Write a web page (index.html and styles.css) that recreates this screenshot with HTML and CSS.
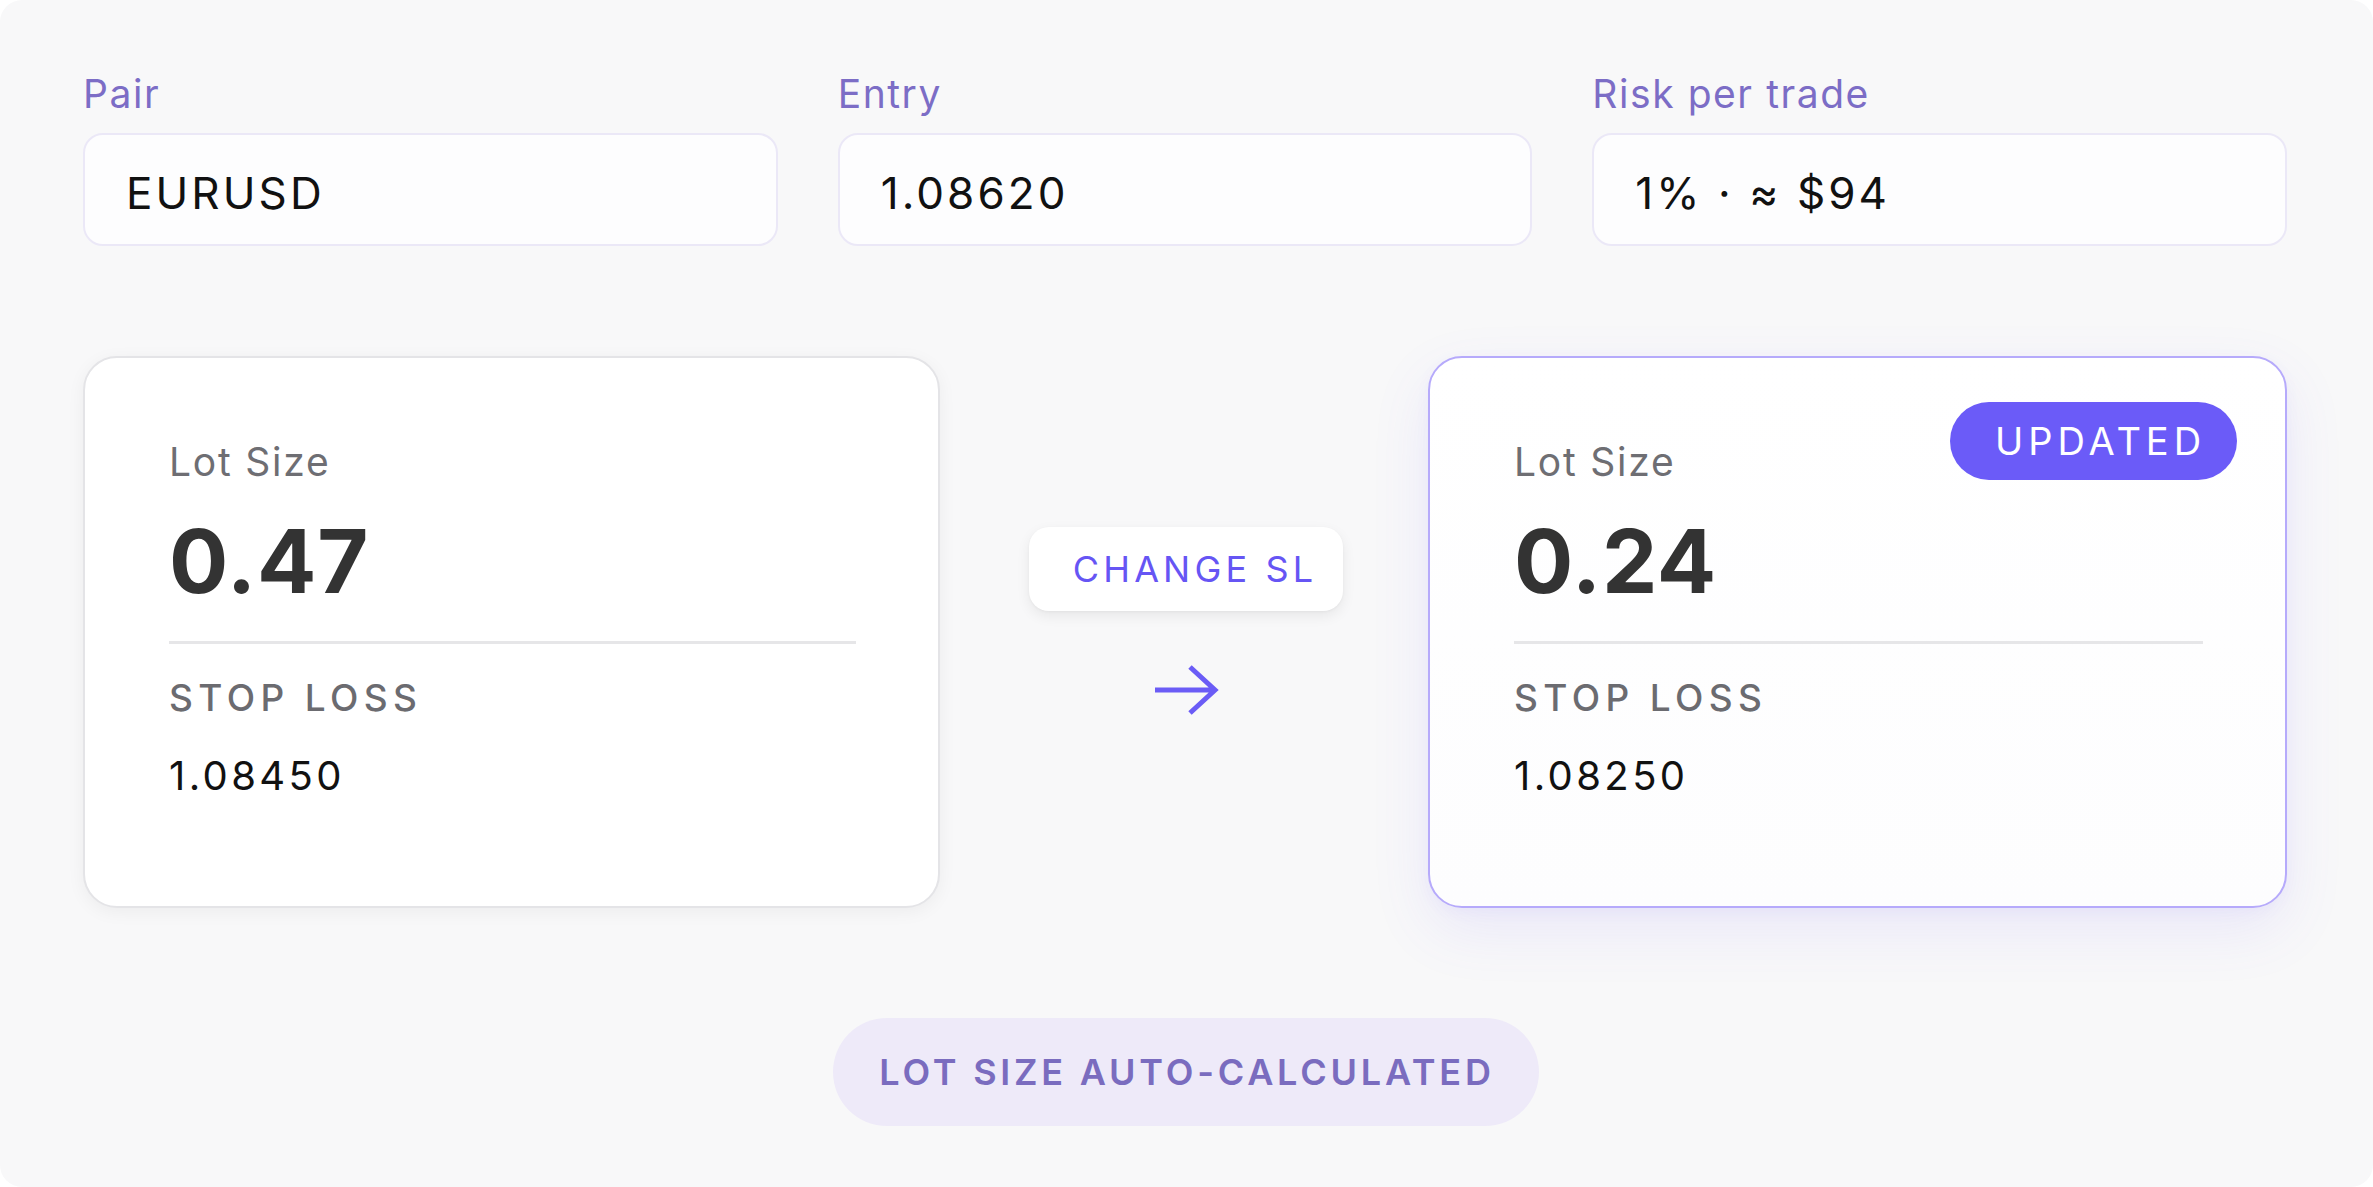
FILE: index.html
```html
<!DOCTYPE html>
<html lang="en">
<head>
<meta charset="utf-8">
<title>Lot Size Calculator</title>
<link rel="stylesheet" href="styles.css">
</head>
<body>
<main class="page">
  <section class="fields">
    <div class="field">
      <div class="field-label">Pair</div>
      <div class="field-box">EURUSD</div>
    </div>
    <div class="field">
      <div class="field-label">Entry</div>
      <div class="field-box">1.08620</div>
    </div>
    <div class="field">
      <div class="field-label">Risk per trade</div>
      <div class="field-box">1% · ≈ $94</div>
    </div>
  </section>

  <section class="compare">
    <div class="card">
      <div class="card-label">Lot Size</div>
      <div class="card-value">0.47</div>
      <div class="card-divider"></div>
      <div class="card-caption">STOP LOSS</div>
      <div class="card-price">1.08450</div>
    </div>

    <div class="middle">
      <div class="change-btn">CHANGE SL</div>
      <svg class="arrow" width="66" height="52" viewBox="0 0 66 52" aria-hidden="true">
        <path d="M2 26 H62 M37 3 L62 26 L37 49" fill="none" stroke="#6b5cf6" stroke-width="5" stroke-linecap="butt" stroke-linejoin="miter"/>
      </svg>
    </div>

    <div class="card card-updated">
      <div class="badge">UPDATED</div>
      <div class="card-label">Lot Size</div>
      <div class="card-value">0.24</div>
      <div class="card-divider"></div>
      <div class="card-caption">STOP LOSS</div>
      <div class="card-price">1.08250</div>
    </div>
  </section>

  <section class="footer">
    <div class="pill">LOT SIZE AUTO-CALCULATED</div>
  </section>
</main>
</body>
</html>
```

FILE: styles.css
```css
* {
  box-sizing: border-box;
}

html, body {
  margin: 0;
  padding: 0;
  background: #ffffff;
}

body {
  font-family: "Inter", "Noto Sans", "Liberation Sans", sans-serif;
  color: #111111;
}

.page {
  width: 2373px;
  height: 1187px;
  background: #f8f8f9;
  border-radius: 22px;
  padding: 71px 86px 0 83px;
  display: flex;
  flex-direction: column;
  overflow: hidden;
}

/* ---------- Fields row ---------- */
.fields {
  display: grid;
  grid-template-columns: repeat(3, 1fr);
  column-gap: 60px;
}

.field {
  display: flex;
  flex-direction: column;
  gap: 16px;
}

.field-label {
  font-size: 39px;
  line-height: 46px;
  letter-spacing: 0.04em;
  color: #7c6dc6;
  font-weight: 400;
}

.field-box {
  height: 113px;
  border: 2px solid #ebe8f7;
  border-radius: 20px;
  background: #fdfdfe;
  display: flex;
  align-items: center;
  padding: 7px 40px 0 41px;
  font-size: 44px;
  letter-spacing: 0.07em;
  color: #111111;
}

/* ---------- Compare row ---------- */
.compare {
  margin-top: 110px;
  display: grid;
  grid-template-columns: 857px 1fr 859px;
  height: 552px;
}

.card {
  position: relative;
  background: #ffffff;
  border: 2px solid #e4e4e7;
  border-radius: 34px;
  padding: 80px 82px 0 84px;
  box-shadow: 0 4px 18px rgba(0, 0, 0, 0.05);
  display: flex;
  flex-direction: column;
}

.card-updated {
  border-color: #b6aafb;
  background: linear-gradient(180deg, #ffffff 0%, #fdfdfe 100%);
  box-shadow: 0 22px 60px rgba(108, 92, 246, 0.10), 0 4px 14px rgba(108, 92, 246, 0.05);
}

.card-label {
  font-size: 39px;
  line-height: 47px;
  letter-spacing: 0.045em;
  color: #6e6e73;
}

.card-value {
  margin-top: 28px;
  font-size: 88px;
  line-height: 97px;
  font-weight: 700;
  letter-spacing: 0.01em;
  color: #333333;
}

.card-divider {
  margin-top: 31px;
  height: 3px;
  background: #e6e6e8;
}

.card-caption {
  margin-top: 31px;
  font-size: 37px;
  line-height: 45px;
  font-weight: 500;
  letter-spacing: 0.145em;
  color: #6b6b70;
}

.card-price {
  margin-top: 32px;
  font-size: 40px;
  line-height: 48px;
  letter-spacing: 0.085em;
  color: #111111;
}

.badge {
  position: absolute;
  top: 44px;
  right: 48px;
  width: 287px;
  height: 78px;
  border-radius: 39px;
  background: #6b5bf8;
  color: #ffffff;
  font-size: 38px;
  letter-spacing: 0.13em;
  padding-left: 14px;
  display: flex;
  align-items: center;
  justify-content: center;
}

/* ---------- Middle ---------- */
.middle {
  display: flex;
  flex-direction: column;
  align-items: center;
  justify-content: center;
  padding-bottom: 21px;
  padding-left: 4px;
}

.change-btn {
  height: 84px;
  padding: 0 26px 0 44px;
  background: #ffffff;
  border-radius: 20px;
  box-shadow: 0 5px 14px rgba(0, 0, 0, 0.07), 0 1px 3px rgba(0, 0, 0, 0.04);
  display: flex;
  align-items: center;
  font-size: 36px;
  letter-spacing: 0.115em;
  color: #6655f4;
}

.arrow {
  margin-top: 53px;
  display: block;
}

/* ---------- Footer ---------- */
.footer {
  margin-top: 110px;
  display: flex;
  justify-content: center;
  padding-left: 2px;
}

.pill {
  height: 108px;
  padding: 0 44px 0 46px;
  border-radius: 54px;
  background: #eeeaf9;
  color: #7a6cbf;
  font-size: 36px;
  font-weight: 600;
  letter-spacing: 0.105em;
  display: flex;
  align-items: center;
}
```
